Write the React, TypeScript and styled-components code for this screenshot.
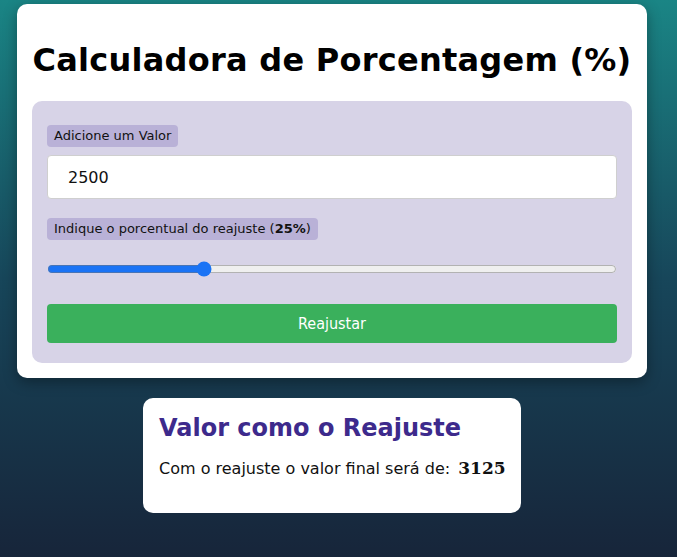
import React, { useState } from "react";
import styled, { createGlobalStyle } from "styled-components";

const Global = createGlobalStyle`
  html, body { margin: 0; padding: 0; }
  body {
    font-family: "DejaVu Sans", Verdana, sans-serif;
    background: linear-gradient(180deg, #1a8585 0%, #17465a 50%, #17253a 100%);
    min-height: 557px;
  }
`;

const Page = styled.div`
  min-height: 557px;
  box-sizing: border-box;
  padding: 4px 13px 0 0;
  display: flex;
  flex-direction: column;
  align-items: center;
`;

const Card = styled.div`
  width: 630px;
  box-sizing: border-box;
  background: #fff;
  border-radius: 10px;
  padding: 15px;
  box-shadow: 0 4px 14px rgba(0, 0, 0, 0.35);
`;

const Title = styled.h1`
  margin: 22px 0 22px;
  font-size: 32px;
  letter-spacing: 0.25px;
  white-space: nowrap;
  font-weight: bold;
  color: #000;
  text-align: center;
  line-height: 38px;
`;

const Panel = styled.div`
  background: #d7d3e7;
  border-radius: 10px;
  padding: 24px 15px 20px;
  display: flex;
  flex-direction: column;
  align-items: flex-start;
`;

const Label = styled.label<{ $gap?: number }>`
  display: inline-block;
  background: #b9b1d7;
  border-radius: 4px;
  padding: 0 7px;
  height: 22px;
  line-height: 22px;
  font-size: 13px;
  color: #111;
  margin-bottom: ${(p) => p.$gap ?? 8}px;
`;

const TextInput = styled.input`
  width: 100%;
  box-sizing: border-box;
  height: 44px;
  border: 1px solid #cfcfcf;
  border-radius: 4px;
  background: #fff;
  padding: 0 20px;
  font-family: "DejaVu Sans", Verdana, sans-serif;
  font-size: 16px;
  color: #111;
  margin-bottom: 19px;
  outline: none;
`;

const Range = styled.input`
  width: 100%;
  margin: 0 0 27px;
  accent-color: #1a73f5;
`;

const Button = styled.button`
  width: 100%;
  height: 39px;
  border: none;
  border-radius: 4px;
  background: #3ab05c;
  color: #fff;
  font-family: "DejaVu Sans Condensed", "DejaVu Sans", sans-serif;
  font-size: 16px;
  cursor: pointer;
`;

const ResultCard = styled.div`
  margin-top: 20px;
  width: 378px;
  height: 115px;
  box-sizing: border-box;
  background: #fff;
  border-radius: 10px;
  padding: 15px 16px 14px;
`;

const ResultTitle = styled.h2`
  margin: 0 0 15px;
  font-size: 24px;
  font-weight: bold;
  color: #3d2a8c;
  line-height: 30px;
`;

const ResultText = styled.p`
  margin: 0;
  font-size: 16px;
  color: #111;
  white-space: nowrap;
  strong {
    font-family: "DejaVu Serif", serif;
    font-size: 17px;
    margin-left: 3px;
  }
`;

export default function App() {
  const [value, setValue] = useState("2500");
  const [pct, setPct] = useState(25);
  return (
    <>
      <Global />
      <Page>
        <Card>
          <Title>Calculadora de Porcentagem (%)</Title>
          <Panel>
            <Label>Adicione um Valor</Label>
            <TextInput value={value} onChange={(e) => setValue(e.target.value)} />
            <Label $gap={21}>
              Indique o porcentual do reajuste (<strong>{pct}%</strong>)
            </Label>
            <Range
              type="range"
              min={-10}
              max={120}
              value={pct}
              onChange={(e) => setPct(Number(e.target.value))}
            />
            <Button>Reajustar</Button>
          </Panel>
        </Card>
        <ResultCard>
          <ResultTitle>Valor como o Reajuste</ResultTitle>
          <ResultText>
            Com o reajuste o valor final será de: <strong>3125</strong>
          </ResultText>
        </ResultCard>
      </Page>
    </>
  );
}
